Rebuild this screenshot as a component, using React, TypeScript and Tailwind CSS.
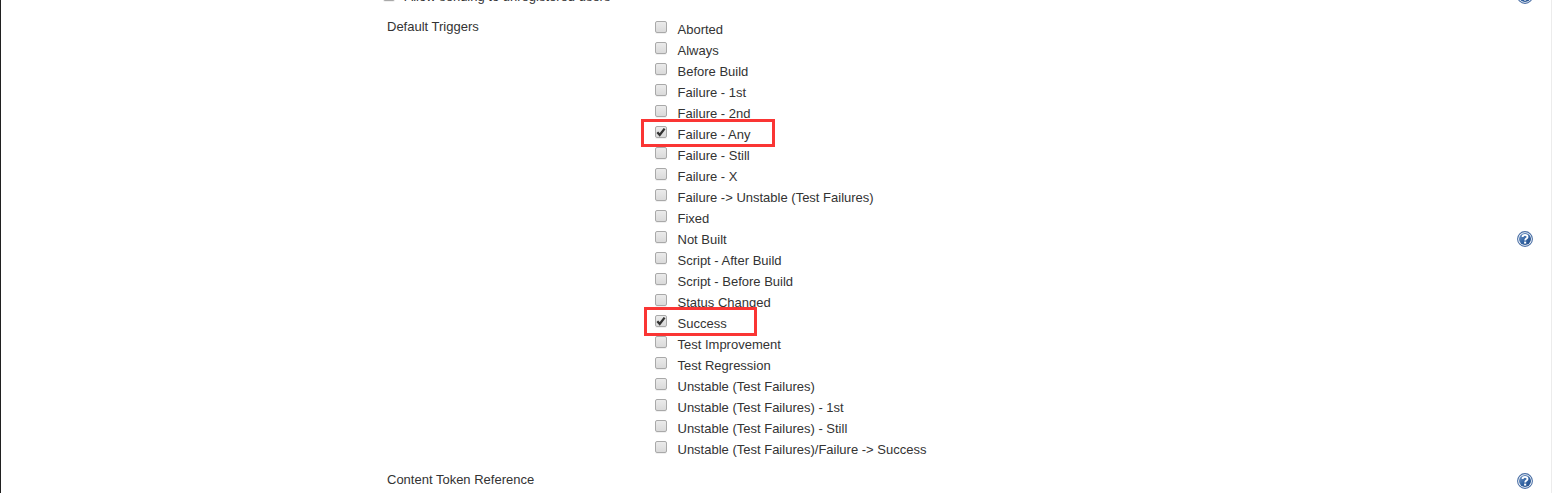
import React from "react";

const triggers: string[] = [
  "Aborted",
  "Always",
  "Before Build",
  "Failure - 1st",
  "Failure - 2nd",
  "Failure - Any",
  "Failure - Still",
  "Failure - X",
  "Failure -> Unstable (Test Failures)",
  "Fixed",
  "Not Built",
  "Script - After Build",
  "Script - Before Build",
  "Status Changed",
  "Success",
  "Test Improvement",
  "Test Regression",
  "Unstable (Test Failures)",
  "Unstable (Test Failures) - 1st",
  "Unstable (Test Failures) - Still",
  "Unstable (Test Failures)/Failure -> Success",
];

const marks: Record<string, string> = {
  "Failure - Any": "-left-[14px] top-[-5px] h-[28px] w-[134px]",
  Success: "-left-[11px] top-[-6px] h-[29px] w-[113px]",
};

function Checkbox({ checked = false }: { checked?: boolean }) {
  return (
    <span
      role="checkbox"
      aria-checked={checked}
      className="block h-3 w-3 shrink-0 rounded-[2px] border border-[#a9a9a9] bg-linear-to-b from-[#ebebeb] to-[#dadada] shadow-[0_1px_0_rgba(0,0,0,0.06)]"
    >
      {checked && (
        <svg viewBox="0 0 10 10" className="block h-[10px] w-[10px] overflow-visible">
          <path d="M1.3 5.3 L3.7 7.9 L8.6 1.6" fill="none" stroke="#333" strokeWidth="2.3" />
        </svg>
      )}
    </span>
  );
}

function HelpIcon() {
  return (
    <svg viewBox="0 0 16 16" className="block h-4 w-4 shrink-0" aria-label="Help">
      <defs>
        <linearGradient id="help-fill" x1="0" y1="0" x2="1" y2="1">
          <stop offset="0" stopColor="#7c9dca" />
          <stop offset="0.5" stopColor="#3465a4" />
          <stop offset="1" stopColor="#204a87" />
        </linearGradient>
      </defs>
      <circle cx="8" cy="8" r="7.4" fill="#fff" stroke="#4a6fa5" strokeWidth="1.1" />
      <circle cx="8" cy="8" r="6" fill="url(#help-fill)" />
      <path
        d="M5.6 6.1 C5.6 3.2 10.5 3.2 10.5 5.9 C10.5 7.6 8.2 7.6 8.2 9.5"
        fill="none"
        stroke="#fff"
        strokeWidth="1.9"
      />
      <rect x="7.1" y="10.6" width="2.1" height="2" fill="#fff" />
    </svg>
  );
}

export default function App() {
  return (
    <div className="flex h-[493px] w-full flex-col overflow-hidden border-l border-r border-l-[#202020] border-r-[#ececec] bg-white pl-[386px] pr-[18px] font-['Liberation_Sans',Arial,sans-serif] text-[13px] leading-[15px] text-[#333]">
      <div className="flex h-[19px] shrink-0 justify-between">
        <div className="-ml-[4px] -mt-[11px] flex h-[15px] gap-[9.5px]">
          <Checkbox />
          <span>Allow sending to unregistered users</span>
        </div>
        <div className="-mt-3">
          <HelpIcon />
        </div>
      </div>

      <div className="flex h-[441px] shrink-0">
        <div className="w-[268px]">Default Triggers</div>
        <div className="flex flex-1 flex-col">
          {triggers.map((name) => (
            <label key={name} className="relative flex h-[21px] gap-[10.5px]">
              <div className="pt-[2px]">
                <Checkbox checked={name in marks} />
              </div>
              <span className="pt-[3px]">{name}</span>
              {name in marks && (
                <span className={`pointer-events-none absolute z-10 border-3 border-[#fa3534] ${marks[name]}`} />
              )}
            </label>
          ))}
        </div>
        <div className="flex h-[440px] items-center">
          <HelpIcon />
        </div>
      </div>

      <div className="flex shrink-0 justify-between pt-3">
        <span>Content Token Reference</span>
        <div className="pt-px">
          <HelpIcon />
        </div>
      </div>
    </div>
  );
}
